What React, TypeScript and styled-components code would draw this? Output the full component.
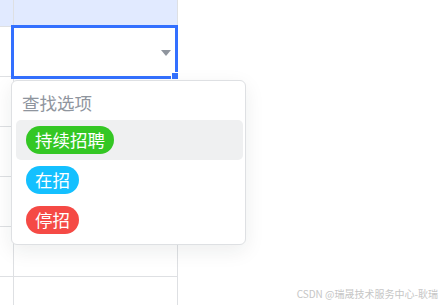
import * as React from 'react';
import styled, {createGlobalStyle} from 'styled-components';

const GlobalStyle = createGlobalStyle`
	html, body {
		margin: 0;
		padding: 0;
		background: #fff;
		font-family: "Noto Sans CJK SC", "Noto Sans", sans-serif;
		overflow: hidden;
	}
`

type Option = {label: string; color: string};

const options: Option[] = [
	{label: '持续招聘', color: '#34c724'},
	{label: '在招', color: '#14c0ff'},
	{label: '停招', color: '#f54a45'},
];

export default function App() {
	const [hover] = React.useState(0);

	return <Page>
		<GlobalStyle/>
		<Sheet>
			<HeaderRow>
				<Cell narrow/>
				<Cell/>
			</HeaderRow>
			{[0, 1, 2, 3, 4, 5].map(i => (
				<Row key={i}>
					<Cell narrow/>
					<Cell/>
				</Row>
			))}

			<Editor>
				<Arrow/>
				<Handle/>
			</Editor>

			<Dropdown>
				<Search>查找选项</Search>
				{options.map((o, i) => (
					<OptionRow key={o.label} active={i === hover}>
						<Tag color={o.color}>{o.label}</Tag>
					</OptionRow>
				))}
			</Dropdown>
		</Sheet>
		<Watermark>CSDN @瑞晟技术服务中心-耿瑞</Watermark>
	</Page>;
}

const Page = styled.div`
	position: relative;
	width: 444px;
	height: 305px;
	overflow: hidden;
`

const Sheet = styled.div`
	position: relative;
	width: 178px;
	display: flex;
	flex-direction: column;
`

const Row = styled.div`
	display: flex;
	height: 50px;
	box-sizing: border-box;
	border-bottom: 1px solid #dee0e3;
`

const HeaderRow = styled(Row)`
	height: 27px;
	background: #e1eaff;
`

const Cell = styled.div<{narrow?: boolean}>`
	width: ${p => p.narrow ? '14px' : '164px'};
	box-sizing: border-box;
	border-right: 1px solid #dee0e3;
`

const Editor = styled.div`
	position: absolute;
	left: 11px;
	top: 25px;
	width: 167px;
	height: 54px;
	box-sizing: border-box;
	border: 3px solid #3370ff;
	background: #fff;
`

const Arrow = styled.div`
	position: absolute;
	right: 4px;
	top: 22px;
	width: 0;
	height: 0;
	border-left: 5px solid transparent;
	border-right: 5px solid transparent;
	border-top: 6px solid #8f959e;
`

const Handle = styled.div`
	position: absolute;
	right: -3px;
	bottom: -3px;
	width: 6px;
	height: 6px;
	background: #3370ff;
	box-shadow: 0 0 0 1px #fff;
`

const Dropdown = styled.div`
	position: absolute;
	left: 11px;
	top: 80px;
	width: 235px;
	box-sizing: border-box;
	padding: 4px 2px 4px 4px;
	background: #fff;
	border: 1px solid #dee0e3;
	border-radius: 6px;
	box-shadow: 0 6px 20px rgba(31, 35, 41, 0.08);
	display: flex;
	flex-direction: column;
`

const Search = styled.div`
	height: 35px;
	display: flex;
	align-items: center;
	padding-left: 6px;
	font-size: 17.5px;
	color: #8f959e;
`

const OptionRow = styled.div<{active?: boolean}>`
	height: 40px;
	display: flex;
	align-items: center;
	padding-left: 10px;
	border-radius: 5px;
	background: ${p => p.active ? '#eff0f1' : 'transparent'};
`

const Tag = styled.span<{color: string}>`
	height: 28px;
	line-height: 28px;
	padding: 0 9px;
	border-radius: 14px;
	background: ${p => p.color};
	color: #fff;
	font-size: 17.5px;
	white-space: nowrap;
`

const Watermark = styled.div`
	position: absolute;
	right: 6px;
	bottom: 4px;
	font-size: 10px;
	color: #c6c6c6;
	white-space: nowrap;
`
